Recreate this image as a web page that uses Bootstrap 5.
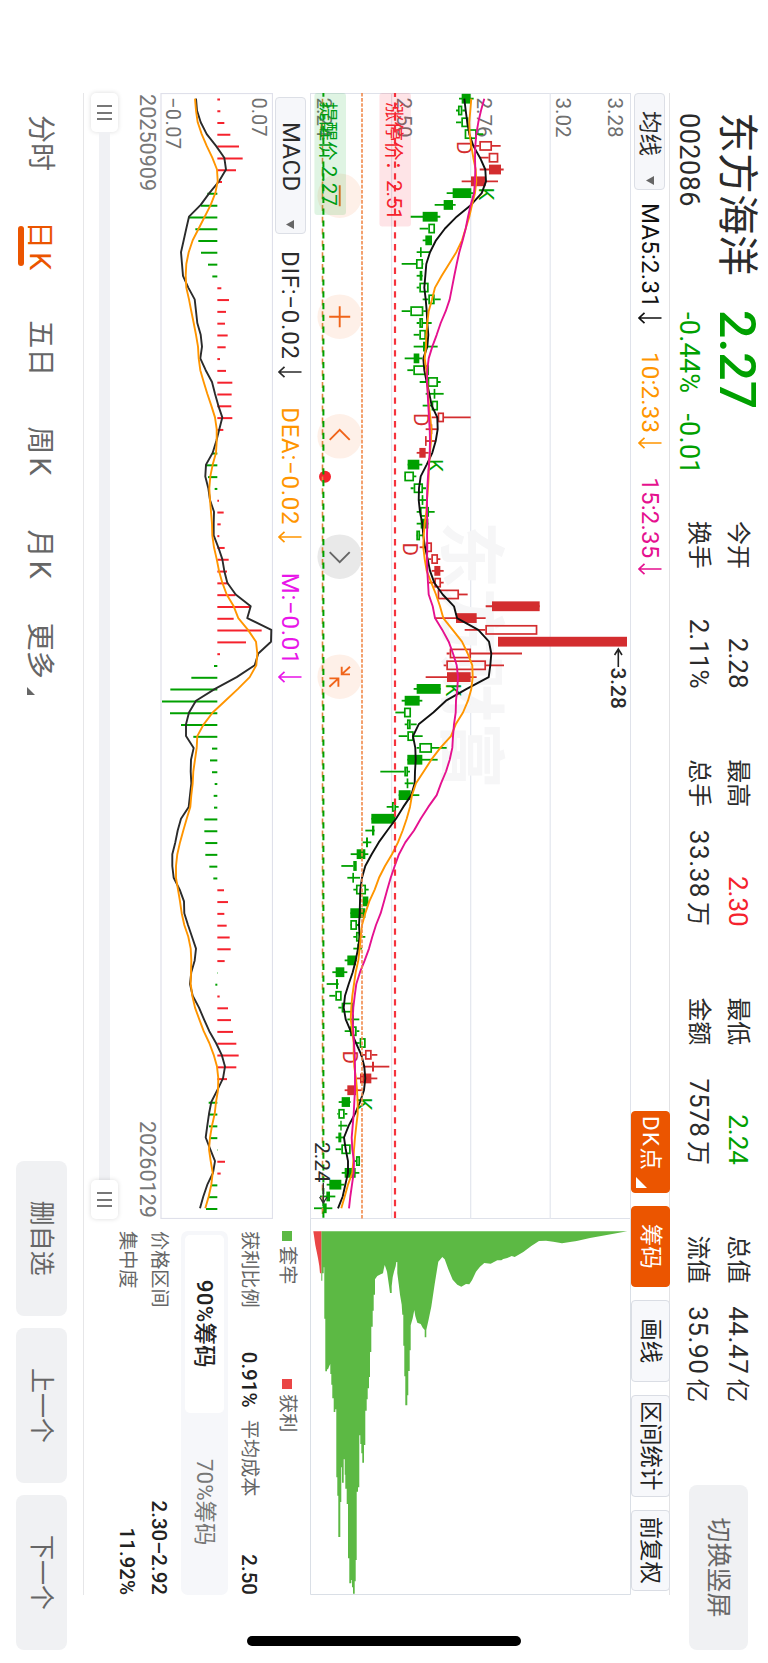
<!DOCTYPE html>
<html lang="zh-CN">
<head>
    <meta charset="UTF-8">
    <title>东方海洋 002086</title>
    <link href="https://cdn.jsdelivr.net/npm/bootstrap@5.3.3/dist/css/bootstrap.min.css" rel="stylesheet">
    <style>
        html, body { width: 768px; height: 1663px; overflow: hidden; background: #fff; }
        body { font-family: Roboto, "Noto Sans CJK SC", sans-serif; color: #2b2b2b; }

        /* landscape screen, turned a quarter to the right */
        .device { width: 768px; height: 1663px; }
        .stage { width: 1663px; height: 768px; transform-origin: 0 0; transform: translateX(768px) rotate(90deg); white-space: nowrap; }
        .stage svg { display: block; flex: none; }

        .up { color: #f5222d; }
        .down { color: #00a000; }

        /* header */
        .quote-head { height: 98px; padding-left: 112px; }
        .stock-id { width: 198px; padding-top: 6px; }
        .stock-name { font-size: 41px; line-height: 50px; }
        .stock-code, .stock-change { font-size: 27px; line-height: 38px; margin-top: 4px; }
        .stock-code { padding-left: 1px; letter-spacing: .5px; }
        .stock-change { padding-left: 2px; letter-spacing: .25px; }
        .stock-price { width: 211px; padding-top: 6px; }
        .price-now { font-size: 50px; line-height: 50px; font-weight: 500; }
        .stats { gap: 70.7px; padding-top: 11px; }
        .stat-col { width: 167.5px; font-size: 24px; line-height: 39px; }
        .stat-col b { font-weight: 400; font-size: 26px; }
        .stat-col .wide-num { letter-spacing: .6px; }
        .unit { font-size: 24px; margin-left: 4px; }
        .btn-soft { background: #f0f1f3; color: #666; border: 0; border-radius: 8px; font-size: 25px; padding: 0; }
        .btn-rotate { width: 165px; height: 59px; margin: 20px 13px 0 auto; }

        /* indicator rows */
        .tool-row { height: 39px; width: 1502px; margin-left: 93px; border-top: 1px solid #e2e2e4; }
        .picker { height: 31px; background: #f6f7fa; border: 1px solid #dcdfe6; border-radius: 4px; line-height: 29px; }
        .picker-ma { width: 97px; font-size: 22.5px; padding: 0 4px 0 17px; }
        .picker-macd { width: 137px; font-size: 24px; letter-spacing: .4px; padding: 0 4px 0 24px; }
        .readout { font-size: 24px; line-height: 36px; gap: 28px; margin-left: 13px; }
        .readout svg { margin-left: 4px; }
        .readout-ma { letter-spacing: .25px; }
        .readout-macd { margin-left: 17px; gap: 29.5px; letter-spacing: .75px; }
        .readout-macd svg { margin-left: 6px; }
        .c-ma5 { color: #111; }
        .c-ma10 { color: #ff9500; }
        .c-ma15 { color: #e5118f; }
        .c-m { color: #e815e8; }
        .tool-btn { height: 39px; margin-top: -1px; font-size: 22.4px; line-height: 37px; padding: 0; text-align: center; width: 81.5px; background: #f7f8fb; border: 1px solid #dadde4; border-radius: 4px; color: #222; }
        .tool-btn.on { background: #eb5500; border-color: #eb5500; color: #fff; }
        .tool-btn.wide { width: 102px; }
        .tool-btn.dk { text-align: left; padding-left: 4px; letter-spacing: 1.4px; }

        /* charts */
        .chart-col { width: 1126px; margin-left: 93px; }
        .macd-row { height: 37px; padding: 2px 0 0 4px; }
        .dates { font-size: 21.6px; line-height: 26px; height: 42px; color: #777; padding: 0 1px; }
        .slider { height: 27px; }
        .slider-track { height: 11.6px; background: #f0f1f4; }
        .handle { width: 39px; height: 27px; background: #fff; border-radius: 5px; box-shadow: 0 0 5px rgba(0,0,0,.14); gap: 4.2px; }
        .handle i { width: 2px; height: 15.5px; background: #777; }

        /* chips panel */
        .side-col { width: 376px; }
        .chips { padding: 10.5px 0 0 12px; font-size: 19.2px; color: #666; }
        .chips b { font-weight: 500; font-size: 20.5px; color: #222; }
        .legend-row { line-height: 24px; margin-bottom: 10.5px; }
        .legend-row span { width: 148px; }
        .legend-row i { width: 10px; height: 10px; margin-right: 5px; }
        .chip-row { line-height: 32px; }
        .profit-rate { margin: 0 12px 0 44px; width: 56px; }
        .seg { height: 47px; background: #f6f7fa; border-radius: 7px; margin: 5px 0 6px; padding: 3.7px; font-size: 22.4px; line-height: 39.6px; color: #777; }
        .seg div { width: 50%; text-align: center; }
        .seg .on { background: #fff; border-radius: 5px; color: #222; font-weight: 500; letter-spacing: .3px; }

        /* footer */
        .foot { height: 83px; }
        .foot-line { height: 1px; width: 1502px; margin-left: 93px; background: #e6e6e8; }
        .tabs { gap: 50px; margin-left: 115px; font-size: 28px; color: #666; line-height: 40px; padding-top: 4px; }
        .tabs b { font-weight: 400; font-size: 29px; margin-left: 3px; }
        .tabs .on { color: #eb5500; position: relative; }
        .tabs .on::after { content: ""; position: absolute; left: 5px; bottom: -1px; width: 40px; height: 6px; border-radius: 3px; background: #eb5500; }
        .tab-month { padding-left: 4px; }
        .tab-more { margin-left: -6px; }
        .foot-btns { gap: 12.4px; margin-right: 13px; }
        .foot-btns .btn { width: 154.8px; height: 51px; }

        .home-bar { position: absolute; left: 1636px; top: 247px; width: 10px; height: 274px; border-radius: 5px; background: #000; }
    </style>
</head>
<body>
<div class="device overflow-hidden">
<div class="stage position-relative d-flex flex-column">

    <!-- Quote header -->
    <div class="quote-head d-flex">
        <div class="stock-id">
            <div class="stock-name">东方海洋</div>
            <div class="stock-code">002086</div>
        </div>
        <div class="stock-price down">
            <div class="price-now">2.27</div>
            <div class="stock-change d-flex"><span class="me-3">-0.44%</span><span class="ms-1">-0.01</span></div>
        </div>
        <div class="stats d-flex" id="stats"></div>
        <button class="btn btn-soft btn-rotate">切换竖屏</button>
    </div>

    <!-- MA toolbar -->
    <div class="tool-row d-flex align-items-center">
        <div class="picker picker-ma d-flex align-items-center justify-content-between">均线
            <svg width="9" height="8"><path d="M0 0H9L4.5 8Z" fill="#666"/></svg></div>
        <div class="readout readout-ma d-flex" id="maReadout"></div>
        <div class="d-flex ms-auto me-1" style="gap:13px">
            <div class="tool-btn on dk position-relative">DK点
                <svg class="position-absolute bottom-0 end-0 me-1 mb-1" width="11" height="11"><path d="M11 0V11H0Z" fill="#fff"/></svg></div>
            <div class="tool-btn on">筹码</div>
            <div class="tool-btn">画线</div>
            <div class="tool-btn wide">区间统计</div>
            <div class="tool-btn">前复权</div>
        </div>
    </div>

    <div class="d-flex">
        <div class="chart-col">
            <svg id="kline" width="1126" height="321" viewBox="93 137 1126 321"></svg>
            <div class="macd-row d-flex align-items-center">
                <div class="picker picker-macd d-flex align-items-center justify-content-between">MACD
                    <svg width="9" height="8"><path d="M0 0H9L4.5 8Z" fill="#666"/></svg></div>
                <div class="readout readout-macd d-flex" id="macdReadout"></div>
            </div>
            <svg id="macd" width="1126" height="113" viewBox="93 495 1126 113"></svg>
            <div class="dates d-flex justify-content-between"><span>20250909</span><span>20260129</span></div>
            <div class="slider d-flex align-items-center">
                <div class="handle d-flex align-items-center justify-content-center"><i></i><i></i><i></i></div>
                <div class="slider-track flex-fill"></div>
                <div class="handle d-flex align-items-center justify-content-center"><i></i><i></i><i></i></div>
            </div>
        </div>

        <div class="side-col">
            <svg id="chips" width="376" height="321" viewBox="1219 137 376 321"></svg>
            <div class="chips">
                <div class="legend-row d-flex">
                    <span class="d-flex align-items-center"><i style="background:#5cb944"></i>套牢</span>
                    <span class="d-flex align-items-center"><i style="background:#ea4646"></i>获利</span>
                </div>
                <div class="chip-row d-flex">
                    <span>获利比例</span><b class="profit-rate">0.91%</b><span>平均成本</span><b class="ms-auto">2.50</b>
                </div>
                <div class="seg d-flex"><div class="on">90%筹码</div><div>70%筹码</div></div>
                <div class="chip-row d-flex justify-content-between"><span>价格区间</span><b>2.30–2.92</b></div>
                <div class="chip-row d-flex justify-content-between"><span>集中度</span><b>11.92%</b></div>
            </div>
        </div>
    </div>

    <!-- Period tabs -->
    <div class="mt-auto">
        <div class="foot-line"></div>
        <div class="foot d-flex align-items-center justify-content-between">
            <div class="tabs d-flex">
                <div>分时</div>
                <div class="on">日<b>K</b></div>
                <div>五日</div>
                <div>周<b>K</b></div>
                <div class="tab-month">月<b>K</b></div>
                <div class="tab-more d-flex align-items-end">更多<svg class="ms-2 mb-2" width="8" height="8"><path d="M8 0V8H0Z" fill="#666"/></svg></div>
            </div>
            <div class="foot-btns d-flex">
                <button class="btn btn-soft">删自选</button>
                <button class="btn btn-soft">上一个</button>
                <button class="btn btn-soft">下一个</button>
            </div>
        </div>
    </div>

    <div class="home-bar"></div>
</div>
</div>

<script src="https://cdn.jsdelivr.net/npm/bootstrap@5.3.3/dist/js/bootstrap.bundle.min.js"></script>
<script>
    const GREEN = "#00a000", RED = "#d32d2f";

    // header numbers: [label, value, unit, class] for both lines of each column
    const stats = [
        [["今开", "2.28", "", ""], ["换手", "2.11%", "", ""]],
        [["最高", "2.30", "", "up"], ["总手", "33.38", "万", "wide-num"]],
        [["最低", "2.24", "", "down"], ["金额", "7578", "万", ""]],
        [["总值", "44.47", "亿", "wide-num"], ["流值", "35.90", "亿", "wide-num"]]
    ];
    document.getElementById("stats").innerHTML = stats.map(col => `<div class="stat-col">${col.map(([k, v, u, c]) =>
        `<div class="d-flex justify-content-between"><span>${k}</span><b class="${c}">${v}${u ? `<span class="unit">${u}</span>` : ""}</b></div>`).join("")}</div>`).join("");

    const downArrow = `<svg width="12" height="36"><path d="M6 6.5V29M.8 23.5L6 29L11.2 23.5" fill="none" stroke="currentColor" stroke-width="1.7"/></svg>`;
    const readout = (id, items) => document.getElementById(id).innerHTML =
        items.map(([t, c]) => `<div class="d-flex ${c}"><span>${t}</span>${downArrow}</div>`).join("");
    readout("maReadout", [["MA5:2.31", "c-ma5"], ["10:2.33", "c-ma10"], ["15:2.35", "c-ma15"]]);
    readout("macdReadout", [["DIF:−0.02", ""], ["DEA:−0.02", "c-ma10"], ["M:−0.01", "c-m"]]);

    const STEP = 11.804, X0 = 98.7;
    const xAt = i => X0 + i * STEP;
    const poly = (vals, base, color, w = 1.6) =>
        `<polyline points="${vals.map((v, i) => `${xAt(i).toFixed(1)},${(base - v / 3).toFixed(1)}`).join(" ")}" fill="none" stroke="${color}" stroke-width="${w}" stroke-linejoin="round"/>`;

    // candles: kind (g/r, f = filled, h = hollow), low, body low, body high, high
    const candles = `gf 477 485 512 521|gh 468 474 487 498|gh 468 484 505 505|gh 494 494 530 550|rh 522 538 576 602|rh 538 566 595 595|rf 539 567 603 611|rf 485 513 557 594|gf 440 458 514 520|gf 404 431 459 467|gf 332 368 413 421|gh 359 385 405 405|gf 368 376 396 396|gf 350 360 365 390|gh 305 348 369 370|gf 350 359 367 368|gh 350 358 386 386|gh 368 385 404 422|gh 305 331 370 378|gh 350 358 369 395|gh 341 358 378 378|gf 341 369 377 413|gf 314 341 358 366|gh 322 340 387 387|gh 359 383 414 422|gf 377 401 406 431|gh 368 395 414 414|rh 395 413 432 512|rf 377 393 397 413|rf 377 375 380 405|rf 350 358 377 386|gf 323 323 358 367|gh 312 313 342 349|gh 332 341 369 378|gf 356 365 370 378|gh 350 360 387 404|gf 350 362 385 385|gh 348 349 360 369|rh 359 378 396 396|rh 386 394 414 421|rf 395 403 421 431|rh 386 403 423 431|rh 413 413 477 503|rf 557 576 719 719|rf 404 468 530 557|rh 494 556 712 712|rf 594 594 981 981|rh 440 449 513 666|rh 431 439 558 612|rf 377 441 512 530|gf 341 350 422 422|gf 305 314 359 367|gh 286 312 333 333|gh 314 321 332 350|gh 296 322 341 368|gh 350 358 396 440|gf 322 322 367 413|gh 241 313 324 330|gf 314 320 325 341|gf 296 296 332 358|gh 260 276 288 296|gf 214 214 286 286|gf 196 216 223 224|gf 188 198 204 214|gf 152 170 196 205|gh 124 160 170 170|gf 142 157 162 180|gh 160 168 198 206|gf 188 188 205 205|gf 151 151 196 196|gh 150 151 171 180|gh 160 168 180 196|gf 160 172 176 186|gf 134 142 168 170|gf 97 107 133 142|gf 80 108 114 116|gh 88 106 125 125|gh 115 125 160 160|gf 142 158 162 178|gh 134 150 170 178|gh 168 179 197 197|rh 180 195 215 232|rf 188 216 222 268|rf 170 180 214 232|rf 134 142 168 187|gf 116 125 150 152|gh 112 115 134 142|gf 115 121 125 142|gf 107 115 124 134|gh 107 124 152 152|gh 160 168 180 180|gf 125 134 167 178|gf 80 88 124 133|gf 60 79 90 106|gf 42 68 80 97`;

    const ma5 = [493,497,502,508,520,540,556,558,545,513,470,435,408,390,379,376,373,377,380,382,385,382,370,373,380,388,395,412,413,407,397,380,362,357,356,360,367,370,375,383,390,403,428,462,471,535,567,574,571,566,500,438,400,356,339,346,347,345,344,334,310,288,262,236,215,196,186,181,180,179,177,179,174,167,158,146,135,131,137,152,168,184,193,196,192,180,165,146,132,137,144,144,136,128,114];
    const ma10 = [514,511,508,509,514,520,527,529,525,516,508,497,486,469,447,425,405,396,386,382,379,378,374,379,382,384,387,391,394,393,390,387,386,384,381,379,374,371,370,374,380,394,408,420,430,458,486,503,517,518,514,504,489,467,453,421,394,371,348,336,330,320,308,294,276,255,237,224,208,196,186,182,179,175,167,162,157,154,152,157,161,161,163,168,171,173,173,169,165,162,160,157,144,134,124];
    const ma15 = [553,543,535,529,526,525,526,525,522,512,504,497,488,478,470,463,456,449,437,422,410,397,386,382,381,383,385,387,389,390,389,387,384,382,381,381,382,381,382,381,382,384,386,398,405,427,446,459,470,474,472,468,467,462,459,457,449,438,423,410,385,362,342,316,297,284,272,262,252,242,228,217,207,194,180,169,164,160,158,160,162,164,165,165,165,163,161,158,155,157,162,161,156,151,147];

    const kBase = 468;
    const circle = (x, icon, grey) => `<g transform="translate(${x} 428.3)"><circle r="22.3" fill="${grey ? "#e9e9e9" : "#fef0e8"}"/>
        <path d="${icon}" fill="none" stroke="${grey ? "#666" : "#f0641a"}" stroke-width="1.9"/></g>`;
    const hline = (y, color, dash, w = 1, off = 0) =>
        `<path d="M93 ${y}H1219" stroke="${color}" stroke-width="${w}" ${dash ? `stroke-dasharray="${dash}" stroke-dashoffset="${off}"` : ""}/>`;

    let k = `<rect x="93.5" y="137.5" width="1125" height="320" fill="none" stroke="#dfe2ea"/>`;
    k += [217.8, 297.3, 376.4].map(y => hline(y, "#e3e6ee", "", 1.2)).join("");
    k += `<text x="521" y="321" font-size="67" font-weight="700" fill="#f6f6f7">东方财富</text>`;
    k += [["3.28", 160], ["3.02", 212], ["2.76", 291], ["2.50", 371], ["2.24", 451]].map(([t, y]) =>
        `<text x="97.5" y="${y}" font-size="20.6" fill="#707070">${t}</text>`).join("");
    k += circle(195.7, "M-10.5 0H10.5") + circle(316.7, "M-10.5 0H10.5M0 -10.5V10.5") + circle(436.3, "M3.5 -10L-6.5 0L3.5 10")
        + circle(556.7, "M-4.5 -10L5.5 0L-4.5 10", true)
        + circle(676.7, "M-10 -10.3L-2.3 -2M-10 -2H-2.3V-10.3M10 10.3L1.7 1.3M1.7 10.3V1.3H10");
    k += candles.split("|").map((row, i) => {
        const [kind, ...n] = row.split(" ");
        const [lo, b0, b1, hi] = n.map(v => kBase - v / 3);
        const color = kind[0] === "g" ? GREEN : RED, x = xAt(i);
        if (kind[1] === "f")
            return `<path d="M${x} ${hi}V${lo}" stroke="${color}" stroke-width="1.8"/><rect x="${x - 4.9}" y="${b1}" width="9.8" height="${b0 - b1}" fill="${color}"/>`;
        return `<path d="M${x} ${hi}V${b1}M${x} ${b0}V${lo}" stroke="${color}" stroke-width="1.8"/>
            <rect x="${x - 4.1}" y="${b1 + .8}" width="8.2" height="${Math.max(b0 - b1 - 1.6, 1)}" fill="none" stroke="${color}" stroke-width="1.7"/>`;
    }).join("");
    k += [["D", 141, 311.5], ["D", 413, 353.7], ["D", 542.5, 365.3], ["D", 1050.5, 425.3]].map(([t, x, y]) =>
        `<text x="${x}" y="${y}" font-size="20.5" fill="${RED}">${t}</text>`).join("");
    k += [[187.5, 289.5], [459, 340], [683.5, 322], [1097.5, 411]].map(([x, y]) =>
        `<text x="${x}" y="${y}" font-size="20.5" fill="${GREEN}">K</text>`).join("");
    k += poly(ma5, kBase, "#111", 1.9) + poly(ma10, kBase, "#ff9500", 1.9) + poly(ma15, kBase, "#e5118f", 1.9);
    k += `<circle cx="476.7" cy="443" r="6" fill="#f5222d"/>`;
    k += hline(445.5, "#e0873f", "6 5.8", 1.6, 6) + hline(444.6, GREEN, "6.2 5.6", 2, 2.4);
    k += hline(406, "#f08a4b", "3.6 1.5", 1.6);
    k += hline(373, "#f5333d", "6.4 5.4", 2.2, 2.4);
    k += `<rect x="93" y="422" width="122" height="31.6" rx="3" fill="#1fb43a" fill-opacity=".14"/>
        <text x="102" y="447" font-size="19.5" fill="#009c14">提醒价</text><text x="165.8" y="446" font-size="20.6" fill="#009c14">2.27</text>
        <rect x="93" y="357" width="133.5" height="31.6" rx="3" fill="#f5223c" fill-opacity=".12"/>
        <text x="102" y="381.5" font-size="19.5" fill="#f5222d">涨停价：</text><text x="180" y="381" font-size="20.6" fill="#f5222d">2.51</text>`;
    k += `<path d="M667 149.7H650M655 146L649 149.7L655 153.4" fill="none" stroke="#222" stroke-width="1.6"/>
        <text x="667.5" y="157.3" font-size="20.8" font-weight="500" fill="#2b2b2b">3.28</text>
        <path d="M1183 444.7H1202M1197 441L1203 444.7L1197 448.4" fill="none" stroke="#333" stroke-width="1.4"/>
        <text x="1142" y="452.8" font-size="20.8" fill="#2b2b2b">2.24</text>`;
    document.getElementById("kline").innerHTML = k;

    // MACD
    const hist = [420,421,433,451,477,488,468,426,382,362,327,346,355,363,384,397,424,447,438,435,443,437,420,438,457,455,454,457,430,412,397,378,384,404,417,431,422,418,434,446,441,445,466,510,461,545,498,420,402,334,271,246,270,303,340,396,390,396,404,401,402,373,373,376,376,388,400,432,444,433,440,449,452,434,411,406,419,444,453,459,469,476,469,441,412,386,387,387,389,411,435,422,393,384,378];
    const dif = [348,351,362,380,408,433,438,417,388,362,327,319,311,303,306,309,325,344,348,352,362,366,361,377,396,405,415,427,418,409,398,378,376,385,390,402,401,401,415,427,433,442,467,512,502,574,573,535,524,470,405,348,327,318,318,341,333,332,334,330,326,303,293,286,277,277,281,299,312,313,324,336,348,344,334,330,338,357,372,388,408,425,435,429,412,394,387,382,377,391,405,399,382,370,360];
    const dea = [345,348,353,365,380,397,411,413,406,392,374,356,338,326,319,317,319,327,334,341,348,354,356,361,371,382,394,405,410,410,408,398,391,388,390,393,396,397,402,410,417,427,440,461,475,504,528,532,529,509,474,436,398,371,352,350,345,340,338,334,331,320,310,300,292,288,288,294,300,305,313,325,332,334,333,332,337,345,358,371,388,401,411,415,414,408,404,396,390,387,392,398,394,386,376];
    const mBase = 688, zero = 412;
    let m = `<rect x="93.5" y="495.5" width="1125" height="111.5" fill="none" stroke="#dfe0ea" stroke-width="1.2"/>
        <text x="97.5" y="516.2" font-size="20" fill="#707070">0.07</text><text x="97" y="602.5" font-size="20" letter-spacing=".4" fill="#707070">−0.07</text>`;
    m += hist.map((v, i) => v === zero ? "" :
        `<path d="M${xAt(i) + .7} ${mBase - zero / 3}V${mBase - v / 3}" stroke="${v > zero ? "#f5222d" : GREEN}" stroke-width="2"/>`).join("");
    m += poly(dif, mBase, "#2b2b2b", 1.9) + poly(dea, mBase, "#ff9500", 1.9);
    document.getElementById("macd").innerHTML = m;

    // chip distribution: price offset, length
    const trapped = "94,64 94,212 97,212 97,190 101,190 101,172 103,172 103,326 106,326 106,484 111,484 111,478 114,478 118,468 121,462 121,492 124,492 124,524 127,524 127,565 131,565 131,606 136,606 136,598 139,598 139,802 142,802 142,857 145,857 145,981 151,981 151,876 154,876 154,772 156,772 156,818 161,818 161,748 164,748 164,794 166,794 166,836 170,836 170,882 174,882 174,1045 178,1045 178,1120 184,1120 184,1110 186,1110 186,1132 189,1132 189,1151 194,1151 194,1114 197,1114 197,1050 200,1050 200,845 204,845 204,832 208,832 208,676 211,676 211,702 214,702 214,730 217,730 217,758 222,758 222,705 226,705 226,602 230,602 230,568 233,568 233,535 237,535 237,501 240,501 240,426 244,426 244,350 248,350 248,302 251,302 251,254 255,254 255,208 262,198 272,193 279,190 281,178 284,165 287,173 291,185 294,206 298,233 300,249 305,249 305,228 308,202 312,185 317,168 319,156 322,156 322,190 326,222 330,254 335,284 337,314 340,314 340,407 343,407 343,499 346,499 346,586 352,586 352,556 355,556 355,483 359,483 359,421 362,421 362,346 368,325 373,300 376,318 382,338 392,342 398,353 404,360 404,382 409,382 409,360 416,328 424,290 434,222 445,155 457,141 464,148 475,178 488,209 502,224 514,230 528,222 538,223 546,211 558,185 570,170 583,159 602,161 622,151 634,151 640,147 652,144 665,138 674,141 700,126 724,108 747,93 768,92 790,95 816,100 840,96 860,93 900,84 950,75 1012,64";
    const profit = "70,64 73,84 76,105 80,125 84,145 88,168 90,190 94,190 94,64";
    const area = (pts, color) => `<polygon fill="${color}" points="${pts.split(" ").map(p => {
        const [u, w] = p.split(",");
        return `${(1210 + w / 3).toFixed(1)},${(478 - u / 3).toFixed(1)}`;
    }).join(" ")}"/>`;
    document.getElementById("chips").innerHTML =
        `<path d="M1219 137.5H1594.5V457.5H1219" fill="none" stroke="#dadfe6"/>` + area(trapped, "#5cb944") + area(profit, "#ea4646");
</script>
</body>
</html>
